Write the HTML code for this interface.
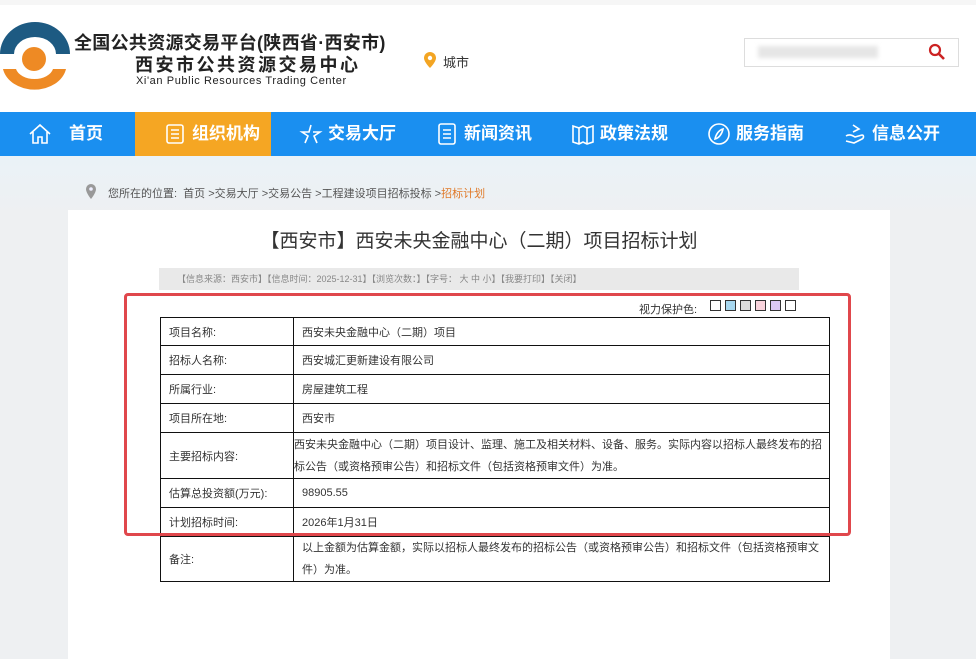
<!DOCTYPE html>
<html><head><meta charset="utf-8"><style>
*{margin:0;padding:0;box-sizing:border-box}
body{width:976px;height:659px;overflow:hidden;background:#eef0f2;font-family:"Liberation Sans","Noto Sans CJK SC",sans-serif;position:relative}
.abs{position:absolute}
.top{left:0;top:0;width:976px;height:112px;background:#fff;border-top:5px solid #f6f6f6}
.nav{left:0;top:112px;width:976px;height:44px;background:#1a8ff0}
.ni{position:absolute;top:0;height:44px;width:136px;color:#fff;font-weight:bold;font-size:17px;line-height:44px}
.ni span{position:absolute;left:69px}
.ni svg{position:absolute;left:28px;top:10px}
.bg{left:0;top:156px;width:976px;height:503px;background:linear-gradient(#eaf2f7,#eef0f2 60px)}
.card{left:68px;top:210px;width:822px;height:449px;background:#fff}
td{border:1px solid #111;font-size:11px;color:#333;padding:0 8px;font-family:"Liberation Sans","Noto Sans CJK SC",sans-serif}
table{border-collapse:collapse;position:absolute;left:160px;width:670px}
</style></head><body>
<div class="abs top"></div>
<svg class="abs" style="left:0;top:22px" width="72" height="72" viewBox="0 0 72 72">
<path d="M0 32 A35 32 0 0 1 70 32 L56 32 A21 17 0 0 0 14 32 Z" fill="#1d5a82"/>
<circle cx="34" cy="37" r="12" fill="#ee8a24"/>
<path d="M3 47 A32 25 0 0 0 66 47 L53 47 A19 13 0 0 1 16 47 Z" fill="#ee8a24"/>
</svg>
<div class="abs" style="left:74px;top:29px;font-size:18px;font-weight:bold;color:#222;letter-spacing:0.3px">全国公共资源交易平台(陕西省·西安市)</div>
<div class="abs" style="left:135px;top:51px;font-size:18px;font-weight:bold;color:#222;letter-spacing:2.5px">西安市公共资源交易中心</div>
<div class="abs" style="left:136px;top:75px;font-size:11px;color:#222;letter-spacing:0.6px">Xi'an Public Resources Trading Center</div>
<svg class="abs" style="left:424px;top:52px" width="12" height="16" viewBox="0 0 12 16"><path d="M6 0A6 6 0 0 0 0 6C0 10 6 16 6 16S12 10 12 6A6 6 0 0 0 6 0Z" fill="#f3a523"/><circle cx="6" cy="6" r="2.2" fill="#fff"/></svg>
<div class="abs" style="left:443px;top:52px;font-size:13px;color:#333">城市</div>
<div class="abs" style="left:744px;top:38px;width:215px;height:29px;border:1px solid #ddd;background:#fff"></div>
<div class="abs" style="left:758px;top:46px;width:120px;height:12px;background:#e6e6e6;filter:blur(2px)"></div>
<svg class="abs" style="left:928px;top:43px" width="18" height="18" viewBox="0 0 18 18"><circle cx="7" cy="7" r="5" fill="none" stroke="#c22" stroke-width="2.2"/><path d="M11 11L16 16" stroke="#c22" stroke-width="2.6"/></svg>
<div class="abs nav">
<div class="ni" style="left:0"><svg width="24" height="24" viewBox="0 0 24 24" fill="none" stroke="#fff" stroke-width="1.6"><path d="M2 12L12 3L22 12M5 10V21H10V15H14V21H19V10"/></svg><span>首页</span></div>
<div class="ni" style="left:135px;background:#f5a623"><svg width="24" height="24" viewBox="0 0 24 24" fill="none" stroke="#fff" stroke-width="1.6"><rect x="4" y="3" width="16" height="18" rx="2"/><path d="M8 8H16M8 12H16M8 16H16"/></svg><span style="left:57px">组织机构</span></div>
<div class="ni" style="left:271px"><svg width="24" height="24" viewBox="0 0 24 24" fill="none" stroke="#fff" stroke-width="1.6"><path d="M12 3L10 10H3L9 14L6 21M14 10H21L15 14L18 21"/></svg><span style="left:57px">交易大厅</span></div>
<div class="ni" style="left:407px"><svg width="24" height="24" viewBox="0 0 24 24" fill="none" stroke="#fff" stroke-width="1.6"><rect x="4" y="2" width="16" height="20" rx="2"/><path d="M8 8H16M8 12H16M8 16H16"/></svg><span style="left:57px">新闻资讯</span></div>
<div class="ni" style="left:543px"><svg width="24" height="24" viewBox="0 0 24 24" fill="none" stroke="#fff" stroke-width="1.6"><path d="M2 4L8 6L12 4L16 6L22 4V20L16 22L12 20L8 22L2 20Z M8 6V22M16 6V22"/></svg><span style="left:57px">政策法规</span></div>
<div class="ni" style="left:679px"><svg width="24" height="24" viewBox="0 0 24 24" fill="none" stroke="#fff" stroke-width="1.6"><circle cx="12" cy="12" r="10"/><path d="M8 17C9 12 12 8 16 7C15 12 12 16 8 17Z"/></svg><span style="left:57px">服务指南</span></div>
<div class="ni" style="left:815px"><svg width="24" height="24" viewBox="0 0 24 24" fill="none" stroke="#fff" stroke-width="1.6"><path d="M10 3L16 7L10 10M3 14C6 12 9 13 12 15L19 13C21 13 21 16 19 17L11 21L3 19"/></svg><span style="left:57px">信息公开</span></div>
</div>
<div class="abs bg"></div>
<svg class="abs" style="left:86px;top:184px" width="10" height="15" viewBox="0 0 10 15"><path d="M5 0A5 5 0 0 0 0 5C0 9 5 15 5 15S10 9 10 5A5 5 0 0 0 5 0Z" fill="#999"/><circle cx="5" cy="5" r="1.8" fill="#eef"/></svg>
<div class="abs" style="left:108px;top:185px;font-size:11px;color:#555">您所在的位置:&nbsp; 首页 &gt;交易大厅 &gt;交易公告 &gt;工程建设项目招标投标 &gt;<span style="color:#e07a2a">招标计划</span></div>
<div class="abs card"></div>
<div class="abs" style="left:0;width:958px;top:226px;text-align:center;font-size:19px;color:#333">【西安市】西安未央金融中心（二期）项目招标计划</div>
<div class="abs" style="left:159px;top:268px;width:640px;height:22px;background:#e9e9e9;font-size:9px;color:#888;line-height:22px;padding-left:18px">【信息来源：西安市】【信息时间：2025-12-31】【浏览次数：】【字号： 大 中 小】【我要打印】【关闭】</div>
<div class="abs" style="left:639px;top:301px;font-size:11px;color:#333">视力保护色:</div>
<div class="abs" style="left:710px;top:300px;display:flex;gap:4px">
<i style="width:11px;height:11px;border:1px solid #333;background:#fff"></i><i style="width:11px;height:11px;border:1px solid #333;background:#a8d8f0"></i><i style="width:11px;height:11px;border:1px solid #333;background:#ddd"></i><i style="width:11px;height:11px;border:1px solid #333;background:#f9d3dc"></i><i style="width:11px;height:11px;border:1px solid #333;background:#dcc8f5"></i><i style="width:11px;height:11px;border:1px solid #333;background:#fff"></i></div>
<table style="top:317px">
<tr style="height:28px"><td style="width:133px">项目名称:</td><td>西安未央金融中心（二期）项目</td></tr>
<tr style="height:29px"><td>招标人名称:</td><td>西安城汇更新建设有限公司</td></tr>
<tr style="height:29px"><td>所属行业:</td><td>房屋建筑工程</td></tr>
<tr style="height:29px"><td>项目所在地:</td><td>西安市</td></tr>
<tr style="height:46px"><td>主要招标内容:</td><td style="padding:0;line-height:22px">西安未央金融中心（二期）项目设计、监理、施工及相关材料、设备、服务。实际内容以招标人最终发布的招标公告（或资格预审公告）和招标文件（包括资格预审文件）为准。</td></tr>
<tr style="height:29px"><td>估算总投资额(万元):</td><td>98905.55</td></tr>
<tr style="height:29px"><td>计划招标时间:</td><td>2026年1月31日</td></tr>
<tr style="height:45px"><td>备注:</td><td style="line-height:22px">以上金额为估算金额，实际以招标人最终发布的招标公告（或资格预审公告）和招标文件（包括资格预审文件）为准。</td></tr>
</table>
<div class="abs" style="left:124px;top:293px;width:727px;height:243px;border:3px solid #e0474c;border-radius:4px"></div>
</body></html>
